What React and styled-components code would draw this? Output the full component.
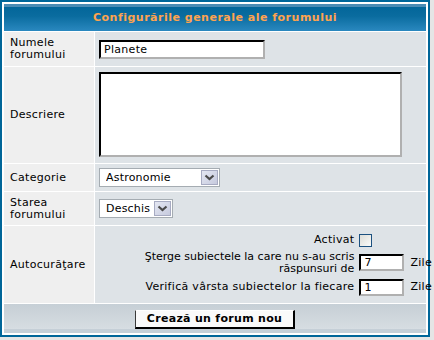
import styled, { createGlobalStyle } from 'styled-components';

const GlobalStyle = createGlobalStyle`
  html, body {
    margin: 0;
    padding: 0;
    background: #e5e5e5;
  }
  body {
    font-family: "DejaVu Sans", Verdana, sans-serif;
    font-size: 11px;
    letter-spacing: 0.3px;
    color: #000;
  }
`;

const Forumline = styled.form`
  box-sizing: border-box;
  width: 430px;
  display: grid;
  grid-template-columns: 90px 1fr;
  grid-template-rows: 27px 34px 96px 27px 33px 77px 29px;
  gap: 1px;
  padding: 2px;
  background: #fff;
  border: 2px solid #006699;
`;

const HeaderCell = styled.div`
  grid-column: 1 / -1;
  display: flex;
  align-items: center;
  justify-content: center;
  background: linear-gradient(
    to bottom,
    #4b8cb5 0,
    #4b8cb5 3px,
    #03669a 3px,
    #0a6c9f 45%,
    #2a88bf 100%
  );
  color: #ffa34f;
  font-weight: bold;
  font-size: 11px;
  letter-spacing: 0.5px;
`;

const LabelCell = styled.div`
  display: flex;
  align-items: center;
  padding: 0 4px 0 6px;
  background: #efefef;
  line-height: 12px;
`;

const FieldCell = styled.div`
  display: flex;
  align-items: ${p => (p.$top ? 'flex-start' : 'center')};
  justify-content: ${p => (p.$right ? 'flex-end' : 'flex-start')};
  padding: ${p => (p.$top ? '5px 4px 0' : '0 4px')};
  background: #dee3e7;
  min-width: 0;
`;

const FooterCell = styled.div`
  grid-column: 1 / -1;
  display: flex;
  align-items: center;
  justify-content: center;
  background: linear-gradient(
    to bottom,
    #c6cfd6 0,
    #cbd3d9 25%,
    #d5dce1 80%,
    #d7dee3 86%,
    #c5cfd7 86%,
    #c5cfd7 100%
  );
`;

const TextInput = styled.input`
  box-sizing: border-box;
  width: ${p => p.$w}px;
  height: ${p => p.$h}px;
  padding: 0 3px;
  border-style: solid;
  border-width: 2px;
  border-color: #000 #b0b0b0 #b0b0b0 #000;
  background: #fff;
  font-family: "DejaVu Sans", Verdana, sans-serif;
  font-size: 11px;
  letter-spacing: 0.3px;
  color: #000;
  outline: none;
`;

const TextArea = styled.textarea`
  box-sizing: border-box;
  width: 303px;
  height: 85px;
  padding: 2px;
  border-style: solid;
  border-width: 2px;
  border-color: #000 #b0b0b0 #b0b0b0 #000;
  background: #fff;
  resize: none;
  outline: none;
  font-family: "DejaVu Sans", Verdana, sans-serif;
  font-size: 11px;
`;

const SelectBox = styled.div`
  box-sizing: border-box;
  display: inline-flex;
  align-items: center;
  width: ${p => p.$w}px;
  height: 19px;
  padding: 1px;
  border: 1px solid #a5acb2;
  background: #fff;
`;

const SelectField = styled.select`
  flex: 1;
  min-width: 0;
  height: 100%;
  padding: 0 0 0 5px;
  border: 0;
  background: transparent;
  appearance: none;
  font-family: "DejaVu Sans", Verdana, sans-serif;
  font-size: 11px;
  letter-spacing: 0.2px;
  color: #000;
  outline: none;
`;

const ArrowBox = styled.span`
  box-sizing: border-box;
  display: flex;
  align-items: center;
  justify-content: center;
  width: 17px;
  height: 15px;
  border: 1px solid #a7abc2;
  background: linear-gradient(135deg, #e4e7f2, #c6cade);
`;

const Chevron = () => (
  <svg width="11" height="7" viewBox="0 0 11 7">
    <path d="M1.5 1.5 L5.5 5 L9.5 1.5" fill="none" stroke="#4a4a4a" strokeWidth="2.2" />
  </svg>
);

const Select = ({ width, value, options }) => (
  <SelectBox $w={width}>
    <SelectField defaultValue={value}>
      {options.map(o => (
        <option key={o}>{o}</option>
      ))}
    </SelectField>
    <ArrowBox>
      <Chevron />
    </ArrowBox>
  </SelectBox>
);

const PruneGrid = styled.div`
  display: grid;
  grid-template-columns: 214px 45px auto;
  grid-template-rows: 13px 24px 17px;
  column-gap: 5px;
  row-gap: 4px;
  margin-right: -10px;
  align-items: center;
  font-size: 11px;
  line-height: 12px;
`;

const PruneLabel = styled.span`
  text-align: right;
  white-space: nowrap;
  letter-spacing: ${p => (p.$tight ? '0' : '0.3px')};
`;

const Unit = styled.span`
  padding-left: 1px;
`;

const Checkbox = styled.input.attrs({ type: 'checkbox' })`
  box-sizing: border-box;
  appearance: none;
  margin: 0;
  width: 13px;
  height: 13px;
  border: 1px solid #1c5180;
  background: linear-gradient(135deg, #dcdcd7, #fbfbf9);
`;

const SubmitButton = styled.button`
  box-sizing: border-box;
  width: 160px;
  height: 19px;
  margin-top: 1px;
  padding: 0;
  border-style: solid;
  border-width: 1px 2px 2px 1px;
  border-color: #fff #000 #000 #3a3a3a;
  background: #fafafa;
  font-family: "DejaVu Sans", Verdana, sans-serif;
  font-size: 11px;
  font-weight: bold;
  letter-spacing: 0.3px;
  color: #000;
`;

export default function App() {
  return (
    <>
      <GlobalStyle />
      <Forumline onSubmit={e => e.preventDefault()}>
        <HeaderCell>Configurările generale ale forumului</HeaderCell>

        <LabelCell>Numele forumului</LabelCell>
        <FieldCell>
          <TextInput $w={166} $h={19} defaultValue="Planete" />
        </FieldCell>

        <LabelCell>Descriere</LabelCell>
        <FieldCell $top>
          <TextArea />
        </FieldCell>

        <LabelCell>Categorie</LabelCell>
        <FieldCell>
          <Select width={121} value="Astronomie" options={['Astronomie', 'Fizică', 'Chimie']} />
        </FieldCell>

        <LabelCell>Starea forumului</LabelCell>
        <FieldCell>
          <Select width={74} value="Deschis" options={['Deschis', 'Închis']} />
        </FieldCell>

        <LabelCell>Autocurăţare</LabelCell>
        <FieldCell $right>
          <PruneGrid>
            <PruneLabel>Activat</PruneLabel>
            <Checkbox />
            <span />
            <PruneLabel $tight>
              Şterge subiectele la care nu s-au scris
              <br />
              răspunsuri de
            </PruneLabel>
            <TextInput $w={45} $h={17} defaultValue="7" />
            <Unit>Zile</Unit>
            <PruneLabel>Verifică vârsta subiectelor la fiecare</PruneLabel>
            <TextInput $w={45} $h={17} defaultValue="1" />
            <Unit>Zile</Unit>
          </PruneGrid>
        </FieldCell>

        <FooterCell>
          <SubmitButton type="submit">Crează un forum nou</SubmitButton>
        </FooterCell>
      </Forumline>
    </>
  );
}
